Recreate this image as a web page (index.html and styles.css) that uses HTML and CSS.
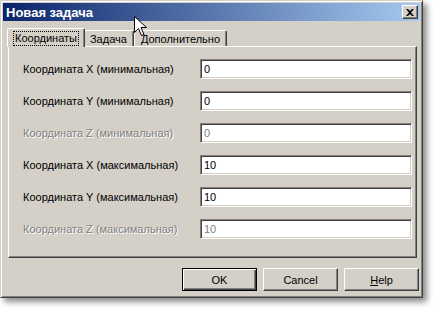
FILE: index.html
```html
<!DOCTYPE html>
<html lang="ru">

<head>
  <meta charset="UTF-8" />
  <title>Новая задача</title>
  <link rel="stylesheet" href="styles.css">
</head>

<body>
  <div class="window">
    <div class="titlebar">
      <span class="title">Новая задача</span>
      <button class="close" type="button" aria-label="Закрыть">
        <svg width="8" height="7" viewBox="0 0 8 7">
          <path d="M0 0h2l2 2 2-2h2L5 3.5 8 7H6L4 5 2 7H0l3-3.5z" fill="#000" />
        </svg>
      </button>
    </div>

    <div class="content">
      <div class="tabs">
        <div class="tab active"><span class="focus">Координаты</span></div>
        <div class="tab">Задача</div>
        <div class="tab">Дополнительно</div>
      </div>

      <div class="panel">
        <div class="row">
          <label>Координата X (минимальная)</label>
          <input type="text" value="0" />
        </div>
        <div class="row">
          <label>Координата Y (минимальная)</label>
          <input type="text" value="0" />
        </div>
        <div class="row disabled">
          <label>Координата Z (минимальная)</label>
          <input type="text" value="0" disabled />
        </div>
        <div class="row">
          <label>Координата X (максимальная)</label>
          <input type="text" value="10" />
        </div>
        <div class="row">
          <label>Координата Y (максимальная)</label>
          <input type="text" value="10" />
        </div>
        <div class="row disabled">
          <label>Координата Z (максимальная)</label>
          <input type="text" value="10" disabled />
        </div>
      </div>

      <div class="buttons">
        <button type="button" class="btn default">OK</button>
        <button type="button" class="btn">Cancel</button>
        <button type="button" class="btn"><u>H</u>elp</button>
      </div>
    </div>
  </div>

  <!-- курсор мыши поверх заголовка -->
  <svg class="cursor" width="13" height="21" viewBox="0 0 13 21">
    <path d="M0.5 0.5v16l4-4 3 7 2.5-1-3-7h5.5z" fill="#fff" stroke="#000" stroke-width="1" />
  </svg>
</body>

</html>
```

FILE: styles.css
```css
* {
  margin: 0;
  padding: 0;
  box-sizing: border-box;
  font-family: 'Liberation Sans', Arial, sans-serif;
}

body {
  background-color: #fff;
  width: 439px;
  height: 312px;
  position: relative;
  overflow: hidden;
}

.window {
  width: 423px;
  height: 298px;
  background-color: #d4d0c8;
  border: 1px solid;
  border-color: #d4d0c8 #404040 #404040 #d4d0c8;
  box-shadow: inset 1px 1px 0 #fff, inset -1px -1px 0 #808080,
    4px 4px 6px rgba(0, 0, 0, 0.45);
  padding: 2px;
  display: flex;
  flex-direction: column;
}

.titlebar {
  height: 18px;
  background: linear-gradient(to right, #0a246a, #a6caf0);
  display: flex;
  align-items: center;
  justify-content: space-between;
  padding: 0 2px 0 3px;
}

.title {
  color: #fff;
  font-weight: bold;
  font-size: 13px;
}

.close {
  width: 16px;
  height: 14px;
  background-color: #d4d0c8;
  border: 1px solid;
  border-color: #fff #404040 #404040 #fff;
  box-shadow: inset -1px -1px 0 #808080;
  display: flex;
  align-items: center;
  justify-content: center;
}

.content {
  flex: 1;
  padding: 6px 3px 0 5px;
  display: flex;
  flex-direction: column;
}

.tabs {
  display: flex;
  height: 19px;
  align-items: flex-end;
  padding-left: 1px;
}

.tab {
  height: 17px;
  padding: 0 6px;
  font-size: 11px;
  color: #000;
  border: 1px solid #fff;
  border-bottom: none;
  border-right-color: #404040;
  box-shadow: inset -1px 0 0 #808080;
  border-radius: 2px 2px 0 0;
  display: flex;
  align-items: center;
  margin-bottom: -1px;
}

.tab.active {
  height: 19px;
  background-color: #d4d0c8;
  margin: 0 -2px -1px -2px;
  padding: 0 6px;
  position: relative;
  z-index: 1;
}

.focus {
  outline: 1px dotted #000;
  padding: 0 1px;
  line-height: 13px;
}

.panel {
  height: 212px;
  border: 1px solid;
  border-color: #fff #404040 #404040 #fff;
  box-shadow: inset -1px -1px 0 #808080;
  padding: 12px 4px 0 14px;
  display: flex;
  flex-direction: column;
  gap: 12px;
}

.row {
  display: flex;
  align-items: center;
  justify-content: space-between;
  height: 20px;
}

.row label {
  font-size: 11px;
  color: #000;
}

.row input {
  width: 212px;
  height: 20px;
  font-size: 11px;
  padding: 0 3px;
  background-color: #fff;
  color: #000;
  border: 1px solid;
  border-color: #808080 #fff #fff #808080;
  box-shadow: inset 1px 1px 0 #404040, inset -1px -1px 0 #d4d0c8;
}

.row.disabled label {
  color: #808080;
  text-shadow: 1px 1px 0 #fff;
}

.row.disabled input {
  color: #808080;
}

.buttons {
  display: flex;
  justify-content: flex-end;
  gap: 6px;
  padding: 10px 0 0;
  margin-right: -2px;
}

.btn {
  width: 75px;
  height: 23px;
  font-size: 11px;
  color: #000;
  background-color: #d4d0c8;
  border: 1px solid;
  border-color: #fff #404040 #404040 #fff;
  box-shadow: inset -1px -1px 0 #808080;
}

.btn.default {
  border: 1px solid #000;
  box-shadow: inset 1px 1px 0 #fff, inset -1px -1px 0 #404040, inset -2px -2px 0 #808080;
}

.cursor {
  position: absolute;
  left: 134px;
  top: 16px;
}
```
